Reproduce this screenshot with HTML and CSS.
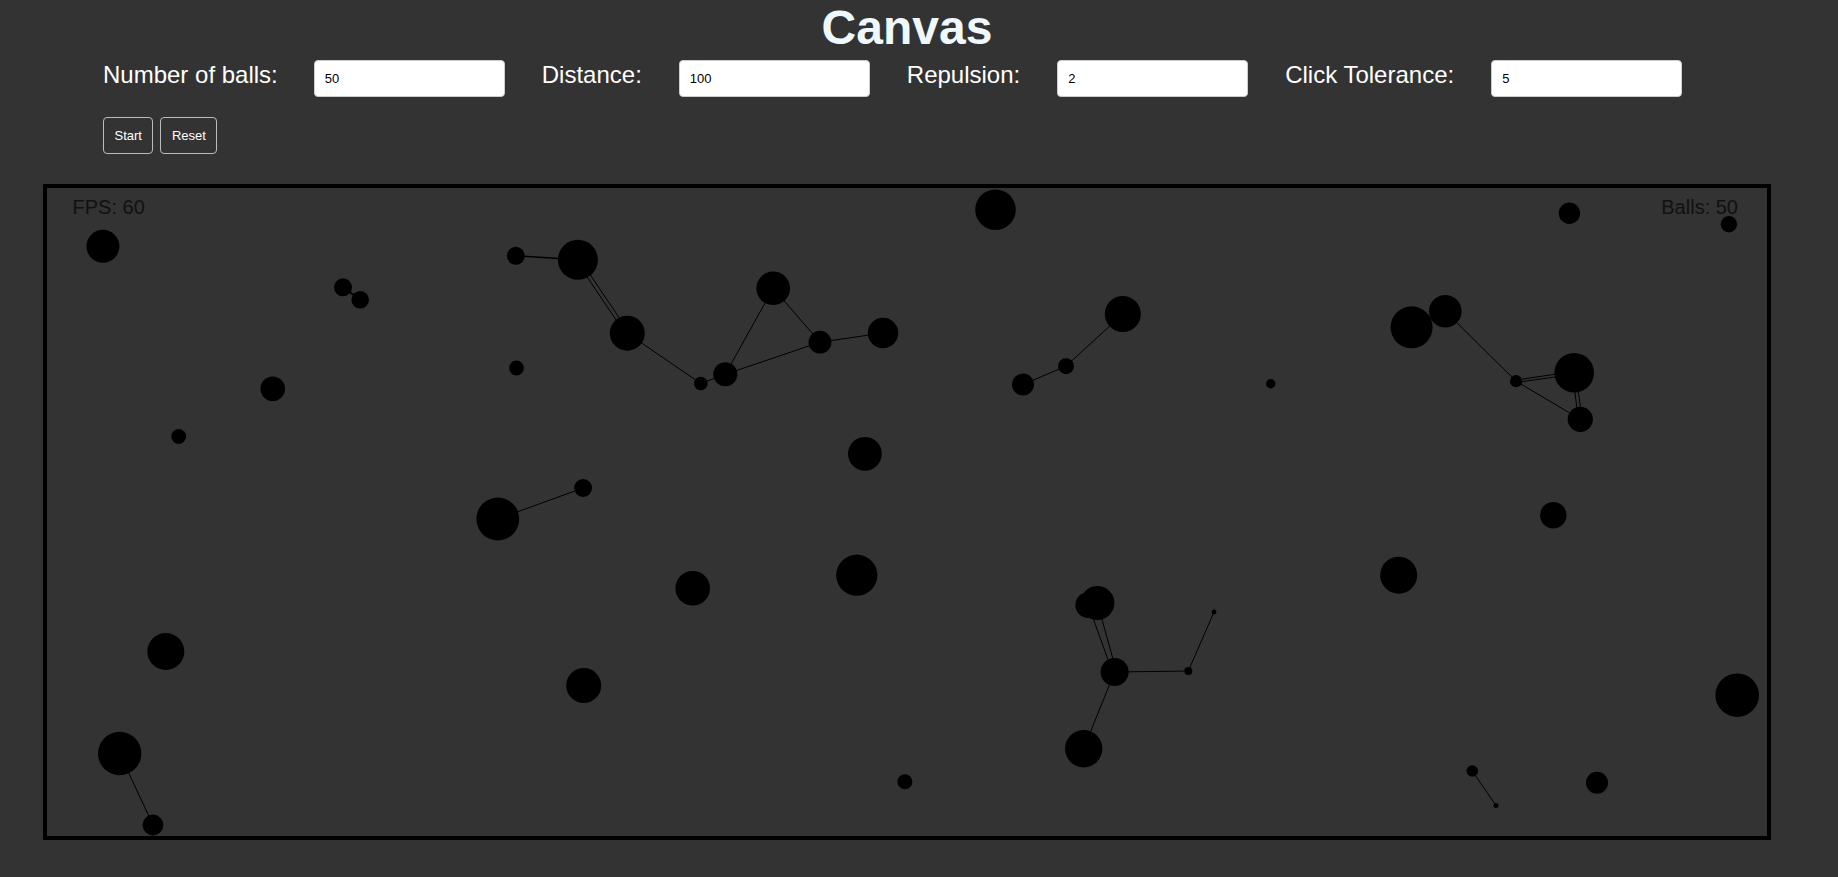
FILE: index.html
```html
<!DOCTYPE html>
<html lang="en">
<head>
<meta charset="utf-8">
<title>Canvas</title>
<link rel="stylesheet" href="styles.css">
</head>
<body>
<div class="page">
  <h1 class="title">Canvas</h1>
  <div class="controls">
    <label class="label" for="balls">Number of balls:</label>
    <input class="field" id="balls" type="text" value="50">
    <label class="label" for="dist">Distance:</label>
    <input class="field" id="dist" type="text" value="100">
    <label class="label" for="rep">Repulsion:</label>
    <input class="field" id="rep" type="text" value="2">
    <label class="label" for="tol">Click Tolerance:</label>
    <input class="field" id="tol" type="text" value="5">
  </div>
  <div class="actions">
    <button class="btn" type="button">Start</button>
    <button class="btn" type="button">Reset</button>
  </div>
  <div class="board">
    <svg class="scene" width="1720" height="648" viewBox="0 0 1720 648" xmlns="http://www.w3.org/2000/svg">
      <g transform="translate(-47 -188)">
        <g class="links" stroke="#000" stroke-width="1" fill="none">
          <line x1="515.8" y1="255.8" x2="577.9" y2="259.8" stroke-width="1.6"/>
          <line x1="579.6" y1="258.9" x2="629" y2="332.4"/>
          <line x1="576.2" y1="260.7" x2="625.6" y2="334"/>
          <line x1="627.3" y1="333.2" x2="700.8" y2="383.5"/>
          <line x1="700.8" y1="383.5" x2="725.3" y2="374.3"/>
          <line x1="725.3" y1="374.3" x2="773.2" y2="288.3"/>
          <line x1="773.2" y1="288.3" x2="820" y2="342.2"/>
          <line x1="725.3" y1="374.3" x2="820" y2="342.2"/>
          <line x1="820" y1="342.2" x2="883" y2="333"/>
          <line x1="343" y1="287.3" x2="360.2" y2="299.7" stroke-width="2"/>
          <line x1="1122.8" y1="314" x2="1066" y2="366.2"/>
          <line x1="1066" y1="366.2" x2="1023" y2="384.5"/>
          <line x1="583.1" y1="488" x2="497.8" y2="519"/>
          <line x1="1445.3" y1="311.3" x2="1516.1" y2="381.2"/>
          <line x1="1516.1" y1="380" x2="1574.2" y2="371.4"/>
          <line x1="1516.1" y1="382.4" x2="1574.2" y2="374.4"/>
          <line x1="1516.1" y1="381.2" x2="1580.3" y2="419.3"/>
          <line x1="1572.4" y1="373" x2="1578.4" y2="419.4"/>
          <line x1="1575.9" y1="373" x2="1582" y2="419.2"/>
          <line x1="119.7" y1="753.5" x2="153" y2="825"/>
          <line x1="1088.4" y1="605" x2="1112.4" y2="672"/>
          <line x1="1097.4" y1="603" x2="1116.6" y2="672"/>
          <line x1="1114.6" y1="672" x2="1188.3" y2="671"/>
          <line x1="1188.3" y1="671" x2="1214" y2="612"/>
          <line x1="1114.6" y1="672" x2="1083.7" y2="748.7"/>
          <line x1="1472.3" y1="771" x2="1496" y2="805.5"/>
        </g>
        <g class="balls" fill="#000">
          <circle cx="102.9" cy="246.3" r="16.5"/>
          <circle cx="343" cy="287.3" r="9"/>
          <circle cx="360.2" cy="299.7" r="8.8"/>
          <circle cx="515.8" cy="255.8" r="9"/>
          <circle cx="577.9" cy="259.8" r="20"/>
          <circle cx="627.3" cy="333.2" r="17.5"/>
          <circle cx="516.5" cy="368" r="7.4"/>
          <circle cx="272.7" cy="388.7" r="12.3"/>
          <circle cx="178.7" cy="436.5" r="7.4"/>
          <circle cx="583.1" cy="488" r="9"/>
          <circle cx="497.8" cy="519" r="21.4"/>
          <circle cx="995.5" cy="209.7" r="20.3"/>
          <circle cx="773.2" cy="288.3" r="16.8"/>
          <circle cx="700.8" cy="383.5" r="6.8"/>
          <circle cx="725.3" cy="374.3" r="12"/>
          <circle cx="820" cy="342.2" r="11.4"/>
          <circle cx="883" cy="333" r="15.2"/>
          <circle cx="1122.8" cy="314" r="18"/>
          <circle cx="1066" cy="366.2" r="8"/>
          <circle cx="1023" cy="384.5" r="11"/>
          <circle cx="864.9" cy="453.8" r="16.9"/>
          <circle cx="1569.4" cy="213.2" r="10.7"/>
          <circle cx="1728.9" cy="224.2" r="8.2"/>
          <circle cx="1411.6" cy="327.3" r="21"/>
          <circle cx="1445.3" cy="311.3" r="16.3"/>
          <circle cx="1516.1" cy="381.2" r="6.1"/>
          <circle cx="1574.2" cy="372.8" r="19.8"/>
          <circle cx="1580.3" cy="419.3" r="12.6"/>
          <circle cx="1270.7" cy="383.7" r="4.7"/>
          <circle cx="1553.3" cy="515.2" r="13.2"/>
          <circle cx="165.8" cy="651.5" r="18.5"/>
          <circle cx="583.7" cy="685.5" r="17.5"/>
          <circle cx="119.7" cy="753.5" r="21.7"/>
          <circle cx="153" cy="825" r="10.4"/>
          <circle cx="692.7" cy="588.3" r="17.3"/>
          <circle cx="856.8" cy="575.2" r="20.6"/>
          <circle cx="1097.4" cy="603" r="17"/>
          <circle cx="1088.4" cy="605" r="13"/>
          <circle cx="1114.6" cy="672" r="14"/>
          <circle cx="1188.3" cy="671" r="4"/>
          <circle cx="1214" cy="612" r="2.4"/>
          <circle cx="1083.7" cy="748.7" r="18.7"/>
          <circle cx="904.9" cy="781.7" r="7.5"/>
          <circle cx="1398.7" cy="575.2" r="18.5"/>
          <circle cx="1737.2" cy="695.2" r="21.8"/>
          <circle cx="1472.3" cy="771" r="5.8"/>
          <circle cx="1496" cy="805.5" r="2.5"/>
          <circle cx="1597" cy="782.7" r="11"/>
        </g>
        <text class="hud" x="72.5" y="214.3">FPS: 60</text>
        <text class="hud" x="1738" y="214.3" text-anchor="end">Balls: 50</text>
      </g>
    </svg>
  </div>
</div>
</body>
</html>
```

FILE: styles.css
```css
html, body {
  margin: 0;
  padding: 0;
}

body {
  background: #333333;
  color: #ffffff;
  font-family: "Liberation Sans", Arial, sans-serif;
}

.page {
  margin-left: 43px;
  width: 1728px;
}

.title {
  margin: 0;
  font-size: 48px;
  line-height: normal;
  font-weight: bold;
  text-align: center;
  color: #f0f8ff;
}

.controls {
  display: flex;
  align-items: baseline;
  gap: 37px;
  margin: 5px 0 0 60px;
}

.label {
  font-size: 24px;
  color: #ffffff;
}

.field {
  box-sizing: border-box;
  width: 191px;
  height: 37px;
  padding: 10px;
  border: 1px solid #cccccc;
  border-radius: 4px;
  background: #ffffff;
  color: #000000;
  font: 13px "Liberation Sans", Arial, sans-serif;
  outline: none;
}

.field:first-of-type {
  margin-left: -1px;
}

.actions {
  display: flex;
  gap: 7px;
  margin: 20px 0 0 60px;
}

.btn {
  box-sizing: border-box;
  height: 37px;
  padding: 0 10.5px;
  border: 1px solid #bbbbbb;
  border-radius: 4px;
  background: transparent;
  color: #ffffff;
  font: 13px "Liberation Sans", Arial, sans-serif;
}

.board {
  margin-top: 30px;
  width: 1720px;
  height: 648px;
  border: 4px solid #000000;
}

.scene {
  display: block;
}

.hud {
  font-family: "Liberation Sans", Arial, sans-serif;
  font-size: 20px;
  fill: #111111;
}
```
